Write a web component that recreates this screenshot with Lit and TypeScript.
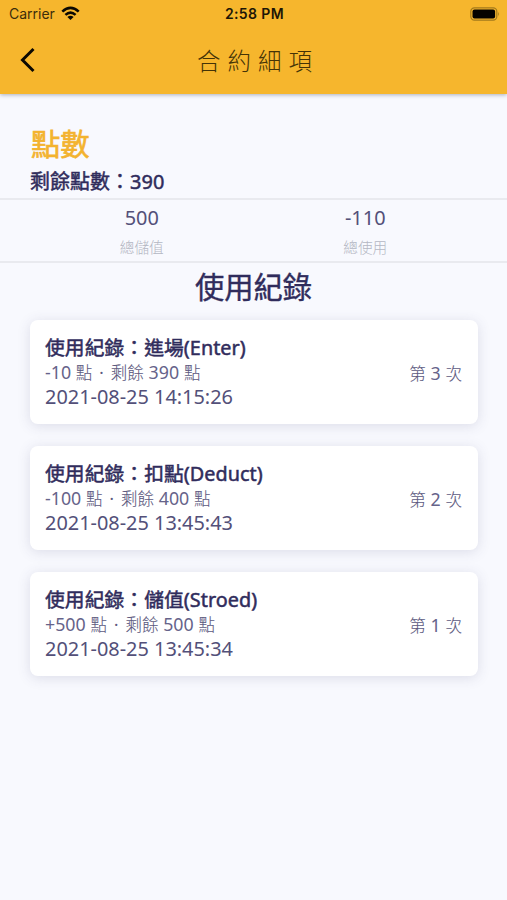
import { LitElement, html, css } from "lit";
import { customElement, property } from "lit/decorators.js";

interface UsageRecord {
  kind: string;
  name: string;
  change: string;
  left: string;
  time: string;
  index: number;
}

const records: UsageRecord[] = [
  { kind: "進場", name: "Enter", change: "-10", left: "390", time: "2021-08-25 14:15:26", index: 3 },
  { kind: "扣點", name: "Deduct", change: "-100", left: "400", time: "2021-08-25 13:45:43", index: 2 },
  { kind: "儲值", name: "Stroed", change: "+500", left: "500", time: "2021-08-25 13:45:34", index: 1 },
];

@customElement("status-bar")
class StatusBar extends LitElement {
  static styles = css`
    :host {
      display: grid;
      grid-template-columns: 1fr auto 1fr;
      align-items: center;
      height: 27px;
      padding: 0 7px 0 9px;
      font-family: Inter, "Liberation Sans", sans-serif;
      line-height: 26px;
      color: #1d1606;
    }
    .carrier { display: flex; align-items: center; gap: 6px; font-size: 14px; color: #3c2d0b; }
    .time { font-size: 14px; font-weight: 600; letter-spacing: 0.4px; }
    .battery { justify-self: end; }
    svg { display: block; }
  `;
  render() {
    return html`
      <div class="carrier">
        <span>Carrier</span>
        <svg width="19" height="15" viewBox="0 0 19 15" fill="none" stroke="#0c0902" stroke-width="2.6">
          <path d="M1.3 5.6 Q9.5 -2 17.7 5.6" />
          <path d="M4.4 8.9 Q9.5 4.4 14.6 8.9" />
          <path d="M9.5 14 L6.4 11 Q9.5 8.4 12.6 11 Z" fill="#0c0902" stroke="none" />
        </svg>
      </div>
      <div class="time">2:58 PM</div>
      <svg class="battery" width="30" height="14" viewBox="0 0 30 14">
        <rect x="0.8" y="0.8" width="26" height="12.4" rx="3.6" fill="none" stroke="#a37a1c" stroke-width="1.2" />
        <rect x="2.5" y="2.5" width="22.6" height="9" rx="2" fill="#050300" />
        <path d="M28.2 4.8 Q30 7 28.2 9.2 Z" fill="#a37a1c" />
      </svg>
    `;
  }
}

@customElement("nav-bar")
class NavBar extends LitElement {
  static styles = css`
    :host {
      display: grid;
      grid-template-columns: 56px 1fr 56px;
      align-items: center;
      height: 67px;
    }
    .back { display: block; margin: 0 0 3px 19px; }
    .title {
      text-align: center;
      font-size: 23.5px;
      font-weight: 300;
      letter-spacing: 7px;
      line-height: 67px;
      padding: 1px 0 0 9px;
      color: #443307;
    }
  `;
  render() {
    return html`
      <svg class="back" width="16" height="26" viewBox="0 0 16 26" fill="none" stroke="#0c0902" stroke-width="3">
        <path d="M14.5 2 L3.5 13 L14.5 24" />
      </svg>
      <div class="title">合約細項</div>
      <span></span>
    `;
  }
}

@customElement("record-card")
class RecordCard extends LitElement {
  @property({ attribute: false }) record!: UsageRecord;
  static styles = css`
    :host {
      display: flex;
      align-items: center;
      justify-content: space-between;
      box-sizing: border-box;
      height: 104px;
      padding: 1px 16px 0 15px;
      border-radius: 8px;
      background: #fff;
      box-shadow: 0 2px 13px rgba(60, 60, 110, 0.15);
      white-space: nowrap;
    }
    .head { font-size: 19.8px; line-height: 26px; -webkit-text-stroke: 0.5px #302c5c; color: #302c5c; letter-spacing: 0.05px; }
    .sub, .index {
      font-size: 16.5px;
      line-height: 22px;
      height: 22px;
      font-weight: 300;
      word-spacing: 0.5px;
      color: #5c597e;
      -webkit-text-stroke: 0.1px #5c597e;
    }
    .num { font-size: 17.8px; font-weight: 400; color: #66638a; -webkit-text-stroke: 0; }
    .dot { margin: 0 2.2px; font-weight: 400; }
    .time { font-size: 19.9px; line-height: 27px; color: #535079; }
  `;
  render() {
    const r = this.record;
    return html`
      <div>
        <div class="head">使用紀錄：${r.kind}(${r.name})</div>
        <div class="sub"><span class="num">${r.change}</span> 點 <span class="dot">·</span> 剩餘 <span class="num">${r.left}</span> 點</div>
        <div class="time">${r.time}</div>
      </div>
      <div class="index">第 <span class="num">${r.index}</span> 次</div>
    `;
  }
}

@customElement("app-root")
class AppRoot extends LitElement {
  static styles = css`
    :host {
      display: block;
      height: 900px;
      overflow: hidden;
      background: #f8f9fe;
      font-family: "Noto Sans", "Noto Sans CJK TC", sans-serif;
      color: #302c5c;
    }
    header { background: #f6b62d; height: 94px; box-shadow: 0 1px 4px rgba(30, 40, 70, 0.35); }
    .summary { padding: 30px 30px 0; height: 74px; }
    .name { font-size: 29.3px; line-height: 40px; padding-left: 1px; color: #f3b32f; -webkit-text-stroke: 0.7px #f3b32f; }
    .remain { font-size: 19.9px; line-height: 34px; margin-top: 1px; letter-spacing: 0.1px; -webkit-text-stroke: 0.5px #302c5c; }
    .totals {
      display: grid;
      grid-template-columns: 1fr 1fr;
      box-sizing: border-box;
      height: 65px;
      padding: 0 30px;
      border-top: 2px solid #e9eaef;
      border-bottom: 2px solid #e9eaef;
      text-align: center;
    }
    .value { font-size: 19.9px; line-height: 35px; color: #535079; }
    .label { font-size: 14.7px; line-height: 24px; font-weight: 300; color: #b4b7c3; }
    .section { margin: 0; text-align: center; font-size: 29.3px; line-height: 49px; height: 50px; font-weight: 400; -webkit-text-stroke: 0.4px #302c5c; }
    .list { display: flex; flex-direction: column; gap: 22px; padding: 7px 29px 0 30px; }
  `;
  render() {
    return html`
      <header>
        <status-bar></status-bar>
        <nav-bar></nav-bar>
      </header>
      <div class="summary">
        <div class="name">點數</div>
        <div class="remain">剩餘點數：390</div>
      </div>
      <div class="totals">
        <div><div class="value">500</div><div class="label">總儲值</div></div>
        <div><div class="value">-110</div><div class="label">總使用</div></div>
      </div>
      <h2 class="section">使用紀錄</h2>
      <div class="list">
        ${records.map((r) => html`<record-card .record=${r}></record-card>`)}
      </div>
    `;
  }
}
